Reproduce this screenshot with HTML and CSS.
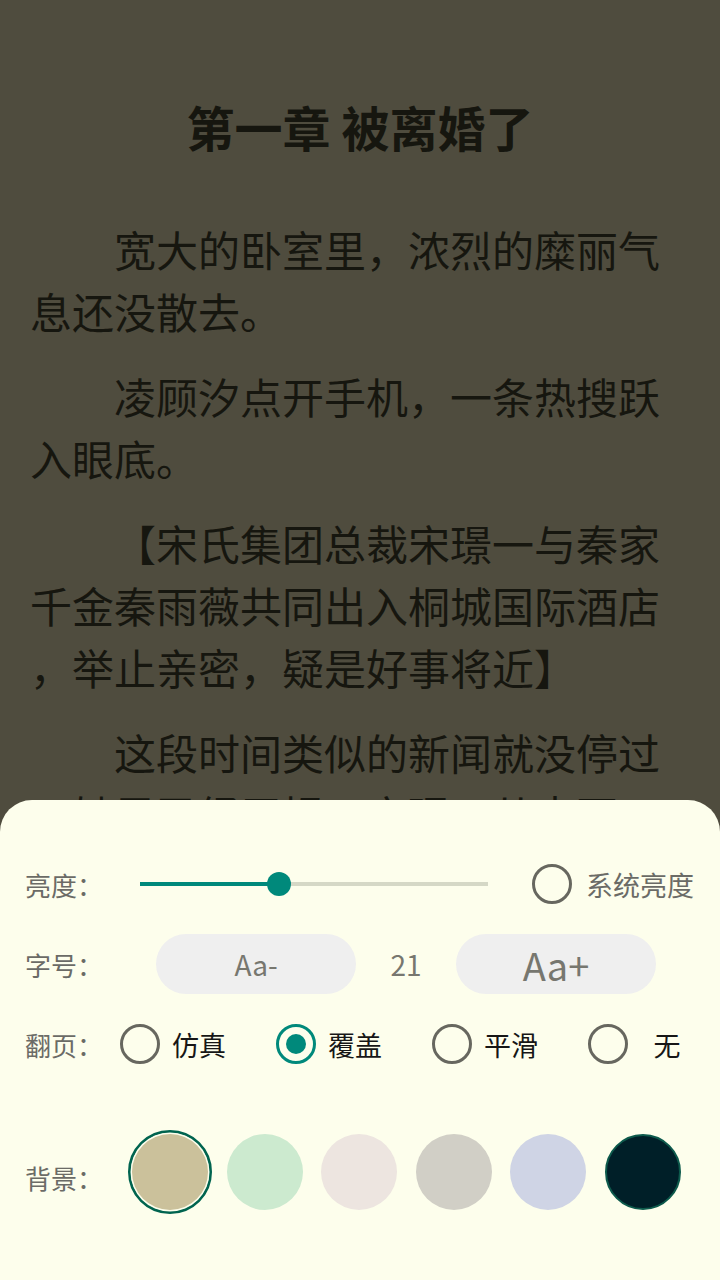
FILE: index.html
```html
<!DOCTYPE html>
<html lang="zh-CN">
  <head>
    <meta charset="UTF-8" />
    <meta name="viewport" content="width=device-width, initial-scale=1.0" />
    <title>第一章 被离婚了</title>
    <link rel="stylesheet" href="styles.css">
  </head>
  <body>
    <div class="reader">
      <h1 class="chapter-title">第一章 被离婚了</h1>
      <div class="chapter-text">
        <p class="para">宽大的卧室里，浓烈的糜丽气<br>息还没散去。</p>
        <p class="para">凌顾汐点开手机，一条热搜跃<br>入眼底。</p>
        <p class="para">【宋氏集团总裁宋璟一与秦家<br>千金秦雨薇共同出入桐城国际酒店<br>，举止亲密，疑是好事将近】</p>
        <p class="para">这段时间类似的新闻就没停过<br>，她早已经习惯，宋璟一从来不</p>
      </div>
    </div>

    <!-- Reading settings sheet -->
    <div class="settings">
      <div class="row">
        <span class="label label-bright">亮度：</span>
        <div class="slider">
          <div class="track"></div>
          <div class="track-active"></div>
          <div class="thumb"></div>
        </div>
        <span class="radio"></span>
        <span class="radio-text grey">系统亮度</span>
      </div>

      <div class="row">
        <span class="label label-size">字号：</span>
        <button class="pill small">Aa-</button>
        <span class="size-value">21</span>
        <button class="pill big">Aa+</button>
      </div>

      <div class="row">
        <span class="label label-page">翻页：</span>
        <div class="options">
          <div class="option"><span class="radio"></span><span class="option-text">仿真</span></div>
          <div class="option"><span class="radio checked"></span><span class="option-text">覆盖</span></div>
          <div class="option"><span class="radio"></span><span class="option-text">平滑</span></div>
          <div class="option"><span class="radio"></span><span class="option-text">无</span></div>
        </div>
      </div>

      <div class="row row-bg">
        <span class="label label-bg">背景：</span>
        <div class="swatches">
          <span class="swatch selected"><span class="dot" style="background:#cbc19b"></span></span>
          <span class="swatch"><span class="dot" style="background:#cceacf"></span></span>
          <span class="swatch"><span class="dot" style="background:#ede5e0"></span></span>
          <span class="swatch"><span class="dot" style="background:#d1cfc6"></span></span>
          <span class="swatch"><span class="dot" style="background:#cfd4e5"></span></span>
          <span class="swatch"><span class="dot dark" style="background:#001f28"></span></span>
        </div>
      </div>
    </div>
  </body>
</html>
```

FILE: styles.css
```css
/* Reader page */
body {
  margin: 0;
  padding: 0;
  width: 720px;
  height: 1280px;
  overflow: hidden;
  position: relative;
  background-color: #4f4c3e;
  font-family: "Noto Sans CJK SC", "Noto Sans", sans-serif;
}
.reader {
  padding-top: 96px;
  color: #16160f;
}
.chapter-title {
  margin: 0;
  font-size: 48px;
  line-height: 60px;
  font-weight: 700;
  text-align: center;
}
.chapter-text {
  margin-top: 62px;
  padding-left: 30px;
}
.para {
  margin: 0 0 23px;
  font-size: 42px;
  line-height: 62px;
  text-indent: 84px;
  white-space: nowrap;
}

/* Settings sheet */
.settings {
  position: absolute;
  left: 0;
  right: 0;
  top: 800px;
  bottom: 0;
  background-color: #fdfeec;
  border-radius: 32px 32px 0 0;
  padding: 54px 0 0 25px;
  display: flex;
  flex-direction: column;
  gap: 20px;
}
.row {
  display: flex;
  align-items: center;
  height: 60px;
}
.row-bg {
  height: 84px;
  margin-top: 36px;
}
.label {
  font-size: 26px;
  color: #6b6b66;
  flex-shrink: 0;
}
.label-bright { width: 115px; }
.label-size { width: 131px; }
.label-page { width: 95px; }
.label-bg { width: 103px; padding-top: 10px; }

.slider {
  position: relative;
  width: 348px;
  height: 24px;
}
.track {
  position: absolute;
  left: 0;
  right: 0;
  top: 10px;
  height: 4px;
  background-color: #d5d8c6;
}
.track-active {
  position: absolute;
  left: 0;
  top: 10px;
  width: 139px;
  height: 4px;
  background-color: #00897b;
}
.thumb {
  position: absolute;
  left: 127px;
  top: 0;
  width: 24px;
  height: 24px;
  border-radius: 50%;
  background-color: #00897b;
}

.radio {
  box-sizing: border-box;
  width: 40px;
  height: 40px;
  border: 3.5px solid #67675f;
  border-radius: 50%;
  flex-shrink: 0;
  display: flex;
  align-items: center;
  justify-content: center;
}
.slider + .radio {
  margin-left: 44px;
}
.radio.checked {
  border-color: #00897b;
}
.radio.checked::after {
  content: "";
  width: 20px;
  height: 20px;
  border-radius: 50%;
  background-color: #00897b;
}
.radio-text {
  margin-left: 14px;
  font-size: 27px;
}
.grey {
  color: #6b6b66;
}

.pill {
  width: 200px;
  height: 60px;
  border: none;
  border-radius: 30px;
  background-color: #efefef;
  color: #77776f;
  font-family: "Noto Sans CJK SC", sans-serif;
  padding: 0;
}
.pill.small { font-size: 28px; }
.pill.big { font-size: 38px; }
.size-value {
  width: 100px;
  text-align: center;
  font-size: 28px;
  color: #77776f;
}

.options {
  display: flex;
  gap: 50px;
}
.option {
  display: flex;
  align-items: center;
  width: 106px;
}
.option-text {
  width: 54px;
  margin-left: 12px;
  text-align: center;
  font-size: 27px;
  color: #161616;
}

.swatches {
  display: flex;
  gap: 10.6px;
}
.swatch {
  box-sizing: border-box;
  width: 84px;
  height: 84px;
  border-radius: 50%;
  display: flex;
  align-items: center;
  justify-content: center;
}
.swatch.selected {
  border: 3px solid #00644f;
}
.dot {
  width: 76px;
  height: 76px;
  border-radius: 50%;
}
.swatch.selected .dot {
  box-shadow: 0 0 0 1.5px #fdfeec;
}
.dot.dark {
  box-sizing: border-box;
  border: 2px solid #0d5a4c;
}
```
